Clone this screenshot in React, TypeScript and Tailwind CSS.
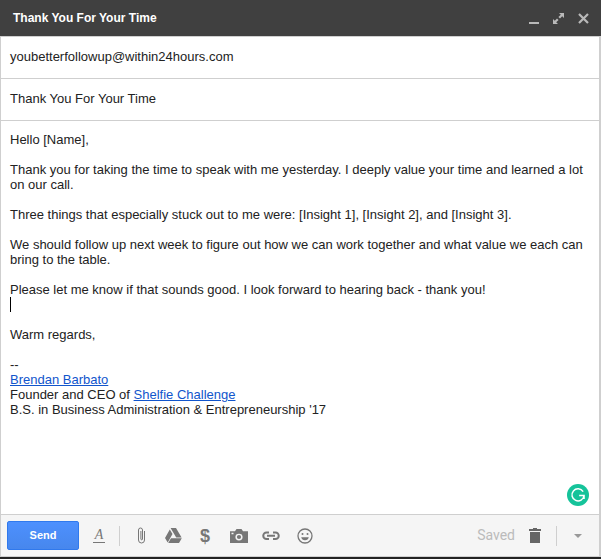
import React from "react";

const P = ({ children }: { children: React.ReactNode }) => <div>{children}</div>;
const Br = () => <div className="h-[15px]" />;
const A = ({ children }: { children: React.ReactNode }) => (
  <a href="#" className="text-[#1155cc] underline">{children}</a>
);

export default function App() {
  return (
    <div className="w-[601px] h-[559px] bg-white flex flex-col overflow-hidden font-['Liberation_Sans',Arial,sans-serif] relative">
      <div className="h-[36px] shrink-0 bg-[#404040] flex items-center justify-between pl-[13px] pr-[12px] border-b border-[#cfcfcf] box-content">
        <span className="text-white text-[12px] font-bold leading-none -mt-[1px]">Thank You For Your Time</span>
        <div className="flex items-center gap-[14px] text-[#b9b9b9]">
          <svg width="10" height="10" viewBox="0 0 10 10" className="mt-[5px]"><rect x="0" y="6" width="10" height="2" fill="currentColor" /></svg>
          <svg width="11" height="11" viewBox="0 0 11 11" fill="currentColor"><path d="M6 0h5v5L9.2 3.2 7 5.6 5.4 4 7.8 1.8zM0 11V6l1.8 1.8L4 5.4 5.6 7 3.2 9.2 5 11z" /></svg>
          <svg width="11" height="11" viewBox="0 0 11 11" stroke="currentColor" strokeWidth="2.2"><path d="M1 1l9 9M10 1l-9 9" /></svg>
        </div>
      </div>
      <div className="flex-1 flex flex-col border-l border-r-2 border-[#cfcfcf] min-h-0">
        <div className="h-[42px] shrink-0 border-b border-[#cfcfcf] flex items-center pl-[9px] pb-[2px] text-[13px] text-[#222222]">youbetterfollowup@within24hours.com</div>
        <div className="h-[42px] shrink-0 border-b border-[#cfcfcf] flex items-center pl-[9px] pb-[2px] text-[13px] text-[#222222]">Thank You For Your Time</div>
        <div className="flex-1 relative pl-[9px] pr-[10px] pt-[11px] text-[13px] leading-[15px] text-[#222222]">
          <P>Hello [Name],</P>
          <Br />
          <P>Thank you for taking the time to speak with me yesterday. I deeply value your time and learned a lot on our call.</P>
          <Br />
          <P>Three things that especially stuck out to me were: [Insight 1], [Insight 2], and [Insight 3].</P>
          <Br />
          <P>We should follow up next week to figure out how we can work together and what value we each can bring to the table.</P>
          <Br />
          <P>Please let me know if that sounds good. I look forward to hearing back - thank you!</P>
          <div className="h-[15px] flex items-center"><div className="w-px h-[15px] bg-black" /></div>
          <Br />
          <P>Warm regards,</P>
          <Br />
          <P>--</P>
          <P><A>Brendan Barbato</A></P>
          <P>Founder and CEO of <A>Shelfie Challenge</A></P>
          <P>B.S. in Business Administration &amp; Entrepreneurship '17</P>
          <div className="absolute right-[10px] bottom-[8px] w-[22px] h-[22px] rounded-full bg-[#15c39a] flex items-center justify-center">
            <svg width="16" height="16" viewBox="0 0 14 14" fill="none" stroke="white" strokeWidth="1.3"><path d="M11.5 4A5.3 5.3 0 1 0 12.3 7.4H8M12.3 7.4v3" /></svg>
          </div>
        </div>
        <div className="h-[43px] shrink-0 bg-[#f5f5f5] border-y border-[#cfcfcf] flex items-center pl-[6px] pr-[17px]">
          <button className="w-[72px] h-[29px] rounded-[2px] bg-gradient-to-b from-[#4d90fe] to-[#4787ed] border border-[#3079ed] text-white text-[11px] font-bold">Send</button>
          <div className="ml-[14px] flex items-center text-[#777777]">
            <span className="w-[12px] text-center font-['Liberation_Serif',serif] italic text-[14px] leading-[14px] border-b border-[#777777]">A</span>
          </div>
          <div className="ml-[14px] w-px h-[20px] bg-[#cfcfcf]" />
          <div className="ml-[17px] flex items-center text-[#777777]">
            <svg width="9" height="17" viewBox="0 0 9 17" fill="none" stroke="currentColor" strokeWidth="1"><path d="M7.5 4v9a3 3 0 0 1-6 0V3a2 2 0 0 1 4 0v9a.8.8 0 0 1-1.6 0V4" /></svg>
            <svg width="17" height="15" viewBox="0 0 17 15" fill="currentColor" className="ml-[19px]"><path d="M5.6 0h5.4l5.6 9.4h-5.4zM4.8 1.4l2.7 4.7L2.7 14.6 0 9.9zM6 10.2h10.8L14 15H3.2z" /></svg>
            <span className="ml-[17px] w-[12px] text-center text-[18px] font-bold leading-none">$</span>
            <svg width="18" height="14" viewBox="0 0 18 15" fill="currentColor" className="ml-[19px]" preserveAspectRatio="none"><path fillRule="evenodd" d="M0 2.5h5L6.5 0h5L13 2.5h5V15H0zM9 5a3.6 3.6 0 1 0 0 7.2A3.6 3.6 0 0 0 9 5zM1.5 4v1.5h2V4zM9 6.5a2.1 2.1 0 1 1 0 4.2 2.1 2.1 0 0 1 0-4.2z" /></svg>
            <svg width="18" height="10" viewBox="0 0 18 10" fill="none" stroke="currentColor" strokeWidth="2" className="ml-[14px]"><path d="M7 1.5H4.5a3.2 3.2 0 0 0 0 6.5H7M11 1.5h2.5a3.2 3.2 0 0 1 0 6.5H11M5 4.8h8" /></svg>
            <svg width="16" height="16" viewBox="0 0 16 16" fill="none" stroke="currentColor" strokeWidth="1.3" className="ml-[17px]"><circle cx="8" cy="8" r="7" /><circle cx="5.5" cy="6" r="1" fill="currentColor" stroke="none" /><circle cx="10.5" cy="6" r="1" fill="currentColor" stroke="none" /><path d="M4.2 9.2h7.6a3.9 3.9 0 0 1-7.6 0z" fill="currentColor" stroke="none" /></svg>
          </div>
          <div className="ml-auto flex items-center">
            <span className="font-['Roboto',sans-serif] text-[14px] text-[#bbbbbb]">Saved</span>
            <svg width="12" height="15" viewBox="0 0 12 15" fill="#666666" className="ml-[14px]"><path d="M4 0h4v1h4v2H0V1h4zM1 4h10v11H1z" /></svg>
            <div className="ml-[15px] w-px h-[20px] bg-[#cfcfcf]" />
            <div className="ml-[17px] w-0 h-0 border-x-[4px] border-x-transparent border-t-[4px] border-t-[#999999]" />
          </div>
        </div>
      </div>
      <div className="h-[2px] shrink-0 bg-[#222222]" />
    </div>
  );
}
